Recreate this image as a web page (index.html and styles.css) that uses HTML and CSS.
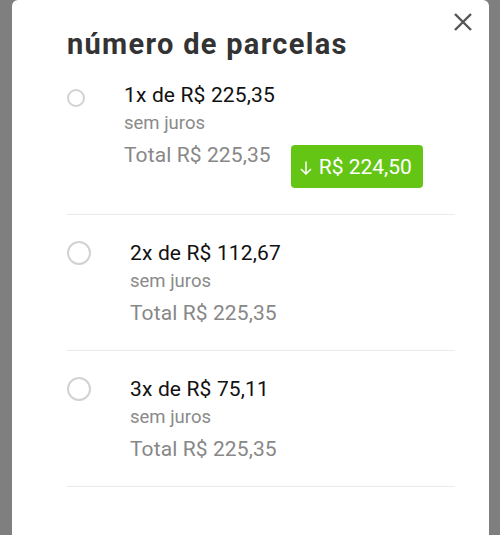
FILE: index.html
```html
<!DOCTYPE html>
<html lang="pt-BR">
<head>
    <meta charset="UTF-8">
    <meta name="viewport" content="width=device-width, initial-scale=1.0">
    <title>Número de parcelas</title>
    <link rel="stylesheet" href="styles.css">
</head>
<body>
    <div class="modal">
        <button class="close" aria-label="Fechar">
            <svg width="20" height="20" viewBox="0 0 20 20">
                <path d="M2 2 L18 18 M18 2 L2 18" stroke="#555" stroke-width="2.4" fill="none"/>
            </svg>
        </button>
        <h1>número de parcelas</h1>
        <ul class="options">
            <li class="option first">
                <span class="radio small"></span>
                <div class="info">
                    <p class="amount">1x de R$ 225,35</p>
                    <p class="note">sem juros</p>
                    <div class="total-row">
                        <p class="total">Total R$ 225,35</p>
                        <span class="discount">
                            <svg class="arrow" width="12" height="14" viewBox="0 0 12 14">
                                <path d="M6 0.5 V13 M1 8 L6 13 L11 8" stroke="#fff" stroke-width="1.5" fill="none"/>
                            </svg>
                            R$ 224,50
                        </span>
                    </div>
                </div>
            </li>
            <li class="option">
                <span class="radio"></span>
                <div class="info">
                    <p class="amount">2x de R$ 112,67</p>
                    <p class="note">sem juros</p>
                    <p class="total">Total R$ 225,35</p>
                </div>
            </li>
            <li class="option">
                <span class="radio"></span>
                <div class="info">
                    <p class="amount">3x de R$ 75,11</p>
                    <p class="note">sem juros</p>
                    <p class="total">Total R$ 225,35</p>
                </div>
            </li>
        </ul>
    </div>
</body>
</html>
```

FILE: styles.css
```css
body {
    margin: 0;
    padding: 0;
    height: 535px;
    overflow: hidden;
    background-color: #7f7f7f;
    font-family: Roboto, "Liberation Sans", Arial, sans-serif;
}
.modal {
    position: relative;
    margin: 0 11px 0 12px;
    height: 535px;
    padding: 27px 34px 0 55px;
    box-sizing: border-box;
    background-color: #fff;
    border-radius: 6px 6px 0 0;
}
.close {
    position: absolute;
    top: 12px;
    right: 16px;
    width: 20px;
    height: 20px;
    padding: 0;
    border: none;
    background: none;
    line-height: 0;
}
h1 {
    margin: 0;
    font-size: 29px;
    line-height: 34px;
    letter-spacing: 1.3px;
    font-weight: 700;
    color: #333;
}
.options {
    list-style: none;
    margin: 0;
    padding: 0;
}
.option {
    display: flex;
    align-items: flex-start;
    padding: 26px 0 25px;
    border-bottom: 1px solid #ebebeb;
}
.option.first {
    padding-top: 22px;
    padding-bottom: 26px;
}
.radio {
    flex: none;
    width: 24px;
    height: 24px;
    margin-top: 0;
    margin-right: 39px;
    border: 2px solid #d2d2d2;
    border-radius: 50%;
    box-sizing: border-box;
}
.radio.small {
    width: 18px;
    height: 18px;
    margin-top: 6px;
}
.info p {
    margin: 0;
}
.amount {
    font-size: 21px;
    line-height: 24px;
    letter-spacing: 0.15px;
    color: #111;
}
.note {
    margin-top: 5px !important;
    font-size: 18.5px;
    line-height: 22px;
    color: #8a8a8a;
}
.total {
    margin-top: 9px !important;
    font-size: 21px;
    line-height: 24px;
    letter-spacing: 0.1px;
    color: #888;
}
.total-row {
    display: flex;
    align-items: flex-start;
}
.discount {
    display: flex;
    align-items: center;
    margin-top: 11px;
    margin-left: 20px;
    padding: 0 11px 0 9px;
    height: 43px;
    background-color: #64c514;
    color: #fff;
    font-size: 21px;
    border-radius: 4px;
}
.arrow {
    margin-right: 7px;
    margin-top: 2px;
}
```
